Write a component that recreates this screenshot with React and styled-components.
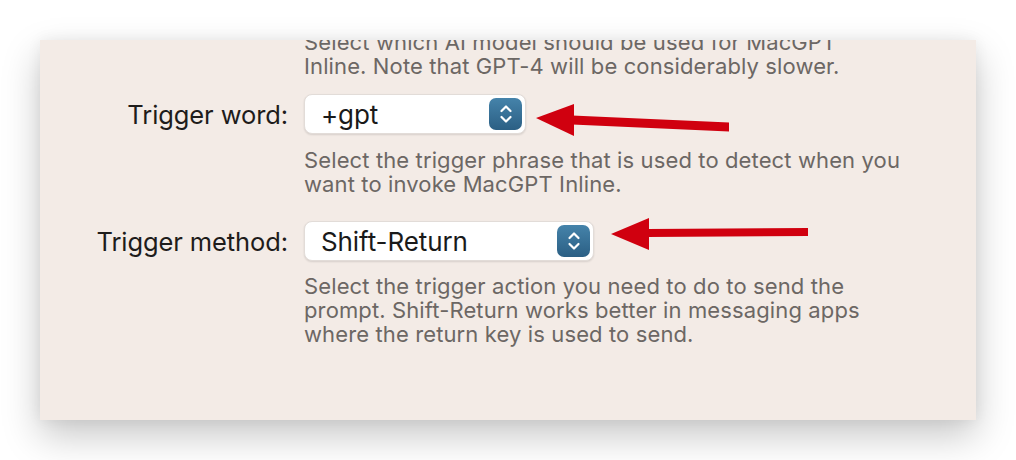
import React from "react";
import styled, { createGlobalStyle } from "styled-components";

const Global = createGlobalStyle`
  html, body { margin: 0; padding: 0; background: #ffffff; }
  body { font-family: Inter, "Noto Sans", "Liberation Sans", sans-serif; -webkit-font-smoothing: antialiased; }
`;

const Stage = styled.div`
  position: relative;
  width: 1016px;
  height: 460px;
  padding: 40px;
  box-sizing: border-box;
  background: #fff;
`;

const Panel = styled.div`
  width: 936px;
  height: 380px;
  background: #f3ebe6;
  box-shadow: 0 16px 36px rgba(0, 0, 0, 0.22), 0 0 14px rgba(0, 0, 0, 0.06);
  overflow: hidden;
`;

const Form = styled.div`
  display: grid;
  grid-template-columns: 248px 1fr;
  column-gap: 16px;
  margin-top: -10px;
`;

const Label = styled.div`
  grid-column: 1;
  justify-self: end;
  align-self: center;
  font-size: 25.5px;
  color: #1e1c1b;
  letter-spacing: -0.1px;
  white-space: nowrap;
`;

const Help = styled.div`
  grid-column: 2;
  font-size: 22px;
  line-height: 24px;
  color: #6c6764;
  letter-spacing: 0.12px;
  white-space: nowrap;
  margin-top: ${(p) => p.$top || 0}px;
  margin-bottom: ${(p) => p.$bottom || 0}px;
`;

const Select = styled.div`
  grid-column: 2;
  width: ${(p) => p.$w}px;
  height: 40px;
  box-sizing: border-box;
  background: #ffffff;
  border-radius: 8px;
  border: 1px solid #e2dcd8;
  box-shadow: 0 1px 2px rgba(0, 0, 0, 0.12);
  display: flex;
  align-items: center;
  justify-content: space-between;
  padding: 0 3px 0 16px;
`;

const Value = styled.span`
  font-size: 26px;
  color: #1a1a1a;
  letter-spacing: -0.1px;
`;

const Stepper = styled.span`
  width: 33px;
  height: 32px;
  border-radius: 7px;
  background: linear-gradient(#4583aa, #2b5f84);
  display: flex;
  align-items: center;
  justify-content: center;
`;

const Overlay = styled.svg`
  position: absolute;
  left: 0;
  top: 0;
  pointer-events: none;
`;

const Chevrons = () => (
  <svg width="16" height="22" viewBox="0 0 16 22" fill="none">
    <path d="M3.5 8 L8 3.5 L12.5 8" stroke="#fff" strokeWidth="2.2" strokeLinecap="round" strokeLinejoin="round" />
    <path d="M3.5 14 L8 18.5 L12.5 14" stroke="#fff" strokeWidth="2.2" strokeLinecap="round" strokeLinejoin="round" />
  </svg>
);

export default function App() {
  return (
    <>
      <Global />
      <Stage>
        <Panel>
          <Form>
            <Help $bottom={16}>
              Select which AI model should be used for MacGPT<br />
              Inline. Note that GPT-4 will be considerably slower.
            </Help>
            <Label>Trigger word:</Label>
            <Select $w={222}>
              <Value>+gpt</Value>
              <Stepper><Chevrons /></Stepper>
            </Select>
            <Help $top={14} $bottom={25}>
              Select the trigger phrase that is used to detect when you<br />
              want to invoke MacGPT Inline.
            </Help>
            <Label>Trigger method:</Label>
            <Select $w={290}>
              <Value>Shift-Return</Value>
              <Stepper><Chevrons /></Stepper>
            </Select>
            <Help $top={13}>
              Select the trigger action you need to do to send the<br />
              prompt. Shift-Return works better in messaging apps<br />
              where the return key is used to send.
            </Help>
          </Form>
        </Panel>
        <Overlay width="1016" height="460" viewBox="0 0 1016 460">
          <polygon points="536,118 574,104 574,136" fill="#d0000f" />
          <polygon points="572,115.5 729,122.5 729,131.5 572,124.5" fill="#d0000f" />
          <polygon points="611,234 649,218 649,250" fill="#d0000f" />
          <polygon points="647,229 808,228 808,236 647,237" fill="#d0000f" />
        </Overlay>
      </Stage>
    </>
  );
}
